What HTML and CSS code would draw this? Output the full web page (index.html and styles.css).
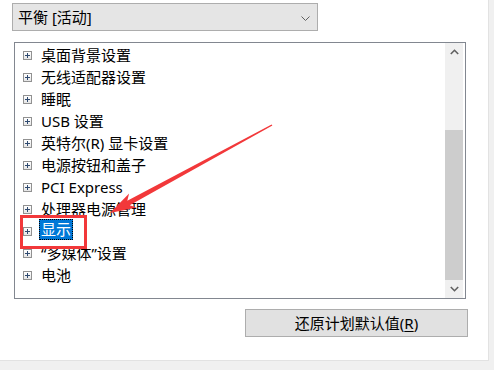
FILE: index.html
```html
<!DOCTYPE html>
<html>
<head>
<meta charset="utf-8">
<link rel="stylesheet" href="styles.css">
</head>
<body>
<div class="panel">
  <div class="select">
    <span class="select-text">平衡 [活动]</span>
    <svg class="chev" width="9" height="5" viewBox="0 0 9 5"><polyline points="0.5,0.5 4.5,4.5 8.5,0.5" fill="none" stroke="#606060" stroke-width="1"/></svg>
  </div>
  <div class="list">
    <div class="items">
      <div class="row"><span class="pbox"></span><span class="label">桌面背景设置</span></div>
      <div class="row"><span class="pbox"></span><span class="label">无线适配器设置</span></div>
      <div class="row"><span class="pbox"></span><span class="label">睡眠</span></div>
      <div class="row"><span class="pbox"></span><span class="label">USB 设置</span></div>
      <div class="row"><span class="pbox"></span><span class="label">英特尔(R) 显卡设置</span></div>
      <div class="row"><span class="pbox"></span><span class="label">电源按钮和盖子</span></div>
      <div class="row"><span class="pbox"></span><span class="label">PCI Express</span></div>
      <div class="row"><span class="pbox"></span><span class="label">处理器电源管理</span></div>
      <div class="row"><span class="pbox"></span><span class="label selected">显示</span></div>
      <div class="row"><span class="pbox"></span><span class="label">“多媒体”设置</span></div>
      <div class="row"><span class="pbox"></span><span class="label">电池</span></div>
    </div>
    <div class="scrollbar">
      <div class="sb-btn"><svg width="9" height="6" viewBox="0 0 9 6"><polyline points="0.8,5 4.5,1.3 8.2,5" fill="none" stroke="#606060" stroke-width="1.6"/></svg></div>
      <div class="sb-track"></div>
      <div class="sb-thumb"></div>
      <div class="sb-btn"><svg width="9" height="6" viewBox="0 0 9 6"><polyline points="0.8,1 4.5,4.7 8.2,1" fill="none" stroke="#606060" stroke-width="1.6"/></svg></div>
    </div>
  </div>
  <div class="actions">
    <button class="btn">还原计划默认值(<u>R</u>)</button>
  </div>
</div>
<div class="mark-rect"></div>
<svg class="arrow" width="494" height="370" viewBox="0 0 494 370">
  <polygon points="272.4,125.6 129.7,205.2 136.7,207.6 110,213 129.1,193.6 127.3,200.8 271.6,124.4" fill="#f2383a"/>
</svg>
</body>
</html>
```
FILE: styles.css
```css
html, body {
  margin: 0;
  padding: 0;
}
body {
  width: 494px;
  height: 370px;
  background: #f0f0f0;
  font-family: "Noto Sans", "Noto Sans CJK SC", sans-serif;
  font-size: 15px;
  color: #000;
  position: relative;
  overflow: hidden;
}
.panel {
  box-sizing: border-box;
  width: 489px;
  height: 361px;
  background: #fff;
  border-right: 1px solid #e2e2e2;
  border-bottom: 1px solid #e2e2e2;
  padding: 3px 0 0 12px;
}
.select {
  box-sizing: border-box;
  width: 306px;
  height: 28px;
  border: 1px solid #adadad;
  background: #e5e5e5;
  display: flex;
  align-items: center;
  justify-content: space-between;
  padding: 0 7px 0 5px;
}
.select-text {
  line-height: 20px;
}
.chev {
  display: block;
  margin-top: 2px;
}
.list {
  box-sizing: border-box;
  margin: 11px 0 0 2px;
  width: 452px;
  height: 257px;
  border: 1px solid #828790;
  display: flex;
}
.items {
  flex: 1;
  padding: 1px 0 0 8px;
}
.row {
  height: 22px;
  display: flex;
  align-items: center;
}
.pbox {
  box-sizing: border-box;
  width: 9px;
  height: 9px;
  border: 1px solid #919191;
  background: linear-gradient(#ffffff, #e6e6e6);
  position: relative;
  flex: none;
  margin-top: 1px;
}
.pbox::before {
  content: "";
  position: absolute;
  left: 1px;
  top: 3px;
  width: 5px;
  height: 1px;
  background: #2f4a70;
}
.pbox::after {
  content: "";
  position: absolute;
  left: 3px;
  top: 1px;
  width: 1px;
  height: 5px;
  background: #2f4a70;
}
.label {
  margin-left: 7px;
  padding: 0 1px;
  line-height: 19px;
  height: 19px;
  white-space: nowrap;
  border: 1px dotted transparent;
}
.label.selected {
  background: #0078d7;
  color: #fff;
  border: 1px dotted #000;
  margin-top: -3px;
}
.scrollbar {
  width: 18px;
  margin-right: 2px;
  background: #f0f0f0;
  display: flex;
  flex-direction: column;
}
.sb-btn {
  height: 18px;
  display: flex;
  align-items: center;
  justify-content: center;
  flex: none;
}
.sb-track {
  height: 69px;
  flex: none;
}
.sb-thumb {
  flex: 1;
  background: #cdcdcd;
}
.actions {
  display: flex;
  justify-content: flex-end;
  padding: 10px 20px 0 0;
}
.btn {
  box-sizing: border-box;
  width: 223px;
  height: 28px;
  border: 1px solid #adadad;
  background: #e1e1e1;
  font-family: "Noto Sans", "Noto Sans CJK SC", sans-serif;
  font-size: 15px;
  color: #000;
  padding: 0;
  line-height: 20px;
}
.btn u {
  text-underline-offset: 2px;
}
.mark-rect {
  position: absolute;
  left: 20px;
  top: 215px;
  width: 61px;
  height: 28px;
  border: 3px solid #f2383a;
}
.arrow {
  position: absolute;
  left: 0;
  top: 0;
  pointer-events: none;
}
```
